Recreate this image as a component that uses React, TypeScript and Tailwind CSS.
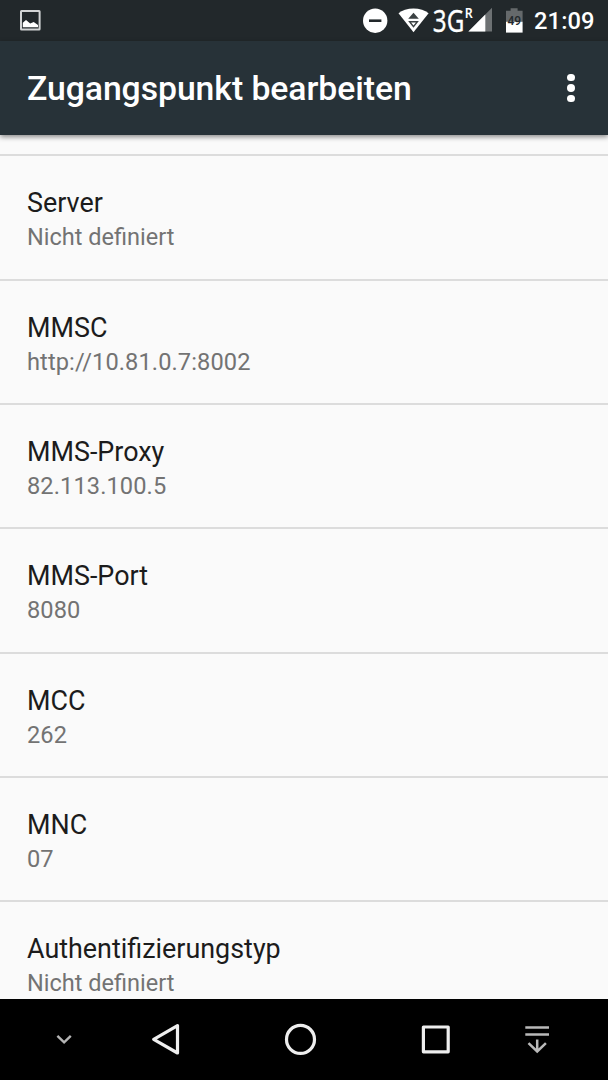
import React from 'react';

interface Preference {
    title: string;
    summary: string;
}

const preferences: Preference[] = [
    { title: 'Server', summary: 'Nicht definiert' },
    { title: 'MMSC', summary: 'http://10.81.0.7:8002' },
    { title: 'MMS-Proxy', summary: '82.113.100.5' },
    { title: 'MMS-Port', summary: '8080' },
    { title: 'MCC', summary: '262' },
    { title: 'MNC', summary: '07' },
    { title: 'Authentifizierungstyp', summary: 'Nicht definiert' },
];

const StatusBar: React.FC = () => (
    <div className="flex h-[41px] shrink-0 items-start bg-[#22282b] pl-[19px] pr-[13px] text-white">
        <svg className="h-[41px] w-[23px]" viewBox="19 0 23 41">
            <rect x="21" y="11" width="18.6" height="18.6" rx="0.5" fill="none" stroke="#d2d4d5" strokeWidth="2" />
            <path d="M22.8 27.3v-4.5l3.2-2.9 4.2 3.6 3.5-1.5 4.3 3v2.3z" fill="#fff" />
        </svg>

        <div className="ml-auto flex">
            {/* do not disturb */}
            <svg className="h-[41px] w-[36px]" viewBox="362 0 36 41">
                <circle cx="375.2" cy="20.7" r="12.2" fill="#fff" />
                <rect x="369" y="19.4" width="12.4" height="2.6" fill="#22282b" />
            </svg>
            {/* wifi with traffic arrows */}
            <svg className="h-[41px] w-[35px]" viewBox="398 0 35 41">
                <path d="M398.5 13.3C402 10.2 407.5 8.4 413.5 8.4S425 10.2 428.6 13.3L413.5 32.2z" fill="#fff" />
                <path d="M413.5 12.8l5.3 6h-10.6z" fill="#3b4143" />
                <path d="M409.6 21.8h7.8l-3.9 4.9z" fill="#fff" stroke="#3b4143" strokeWidth="1.4" />
            </svg>
            <svg className="h-[41px] w-[72px]" viewBox="433 0 72 41">
                <text x="432.8" y="31.9" fontSize="30" textLength="31.5" lengthAdjust="spacingAndGlyphs" fill="#fff" stroke="#fff" strokeWidth="0.3" className="font-['Noto_Sans',sans-serif]">3G</text>
                <text x="464.8" y="18" fontSize="13.5" textLength="8" lengthAdjust="spacingAndGlyphs" fill="#fff" className="font-['Noto_Sans',sans-serif] font-semibold">R</text>
                <path d="M492 7.8v23.6h-23.6z" fill="#6d7173" />
                <path d="M485.3 14.5v16.9h-16.9z" fill="#fff" />
            </svg>
            {/* battery */}
            <svg className="h-[41px] w-[29px]" viewBox="505 0 29 41">
                <path d="M510.6 8.2h7v2.6h5v11.2h-16.6V10.8h4.6z" fill="#65696b" />
                <path d="M506 21.8h16.6v10.8H506z" fill="#fff" />
                <text x="514.3" y="25.3" fontSize="12" textAnchor="middle" fill="#22282b" className="font-['Roboto',sans-serif] font-medium">49</text>
            </svg>
            <span className="w-[61px] whitespace-nowrap pt-[7px] text-[23.7px] leading-[28px] font-medium tracking-[0.1px]">21:09</span>
        </div>
    </div>
);

const Toolbar: React.FC = () => (
    <header className="z-10 flex h-[94px] shrink-0 items-center justify-between bg-[#273238] pl-[27px] pr-[33.5px] shadow-[0_2px_5px_rgba(0,0,0,0.45)]">
        <h1 className="pt-[2px] text-[33.75px] leading-[40px] font-medium tracking-[-0.06px] text-white">Zugangspunkt bearbeiten</h1>
        <button className="flex flex-col gap-[3px]" aria-label="Weitere Optionen">
            <span className="size-[7.2px] rounded-full bg-white" />
            <span className="size-[7.2px] rounded-full bg-white" />
            <span className="size-[7.2px] rounded-full bg-white" />
        </button>
    </header>
);

const NavigationBar: React.FC = () => (
    <nav className="flex h-[81px] shrink-0 items-center bg-black pl-[56px]">
        <svg className="h-[81px] w-[16px]" viewBox="56 999 16 81" fill="none" stroke="#b5b5b5" strokeWidth="2.4">
            <path d="M57.4 1035.9l6.7 6.5 6.7-6.5" />
        </svg>
        <svg className="ml-[79px] h-[81px] w-[30px]" viewBox="151 999 30 81" fill="none" stroke="#eee" strokeWidth="3.2" strokeLinejoin="round">
            <path d="M177.5 1025.6v27.4l-23.8-13.7z" />
        </svg>
        <svg className="ml-[102px] h-[81px] w-[34px]" viewBox="283 999 34 81" fill="none" stroke="#eee" strokeWidth="3.2">
            <circle cx="300.5" cy="1039.4" r="14" />
        </svg>
        <svg className="ml-[103px] h-[81px] w-[30px]" viewBox="420 999 30 81" fill="none" stroke="#eee" strokeWidth="3.2" strokeLinejoin="round">
            <rect x="423.4" y="1027" width="24.8" height="24.8" />
        </svg>
        <svg className="ml-[74px] h-[81px] w-[26px]" viewBox="524 999 26 81" fill="none" stroke="#b9b9b9" strokeWidth="2.5">
            <path d="M525.3 1027.5h23.7M525.3 1034.6h23.7M537.2 1039.5v12.2M528.5 1043.2l8.7 8.3 8.7-8.3" />
        </svg>
    </nav>
);

export default function App() {
    return (
        <div className="flex h-[1080px] w-[608px] flex-col overflow-hidden bg-[#fafafa] font-['Roboto',sans-serif]">
            <StatusBar />
            <Toolbar />
            <main className="min-h-0 flex-1 overflow-hidden pt-[19.4px]">
                {preferences.map(pref => (
                    <section key={pref.title} className="h-[124.3px] border-t-2 border-[#dcdcdc] px-[27px] pt-[30px]">
                        <h2 className="text-[26.9px] leading-[34px] text-[#1c1c1c]">{pref.title}</h2>
                        <p className={`leading-[34px] text-[#737373] ${/\d/.test(pref.summary) ? 'text-[23.625px] tracking-[0.1px]' : 'text-[23.5px]'}`}>{pref.summary}</p>
                    </section>
                ))}
            </main>
            <NavigationBar />
        </div>
    );
}
